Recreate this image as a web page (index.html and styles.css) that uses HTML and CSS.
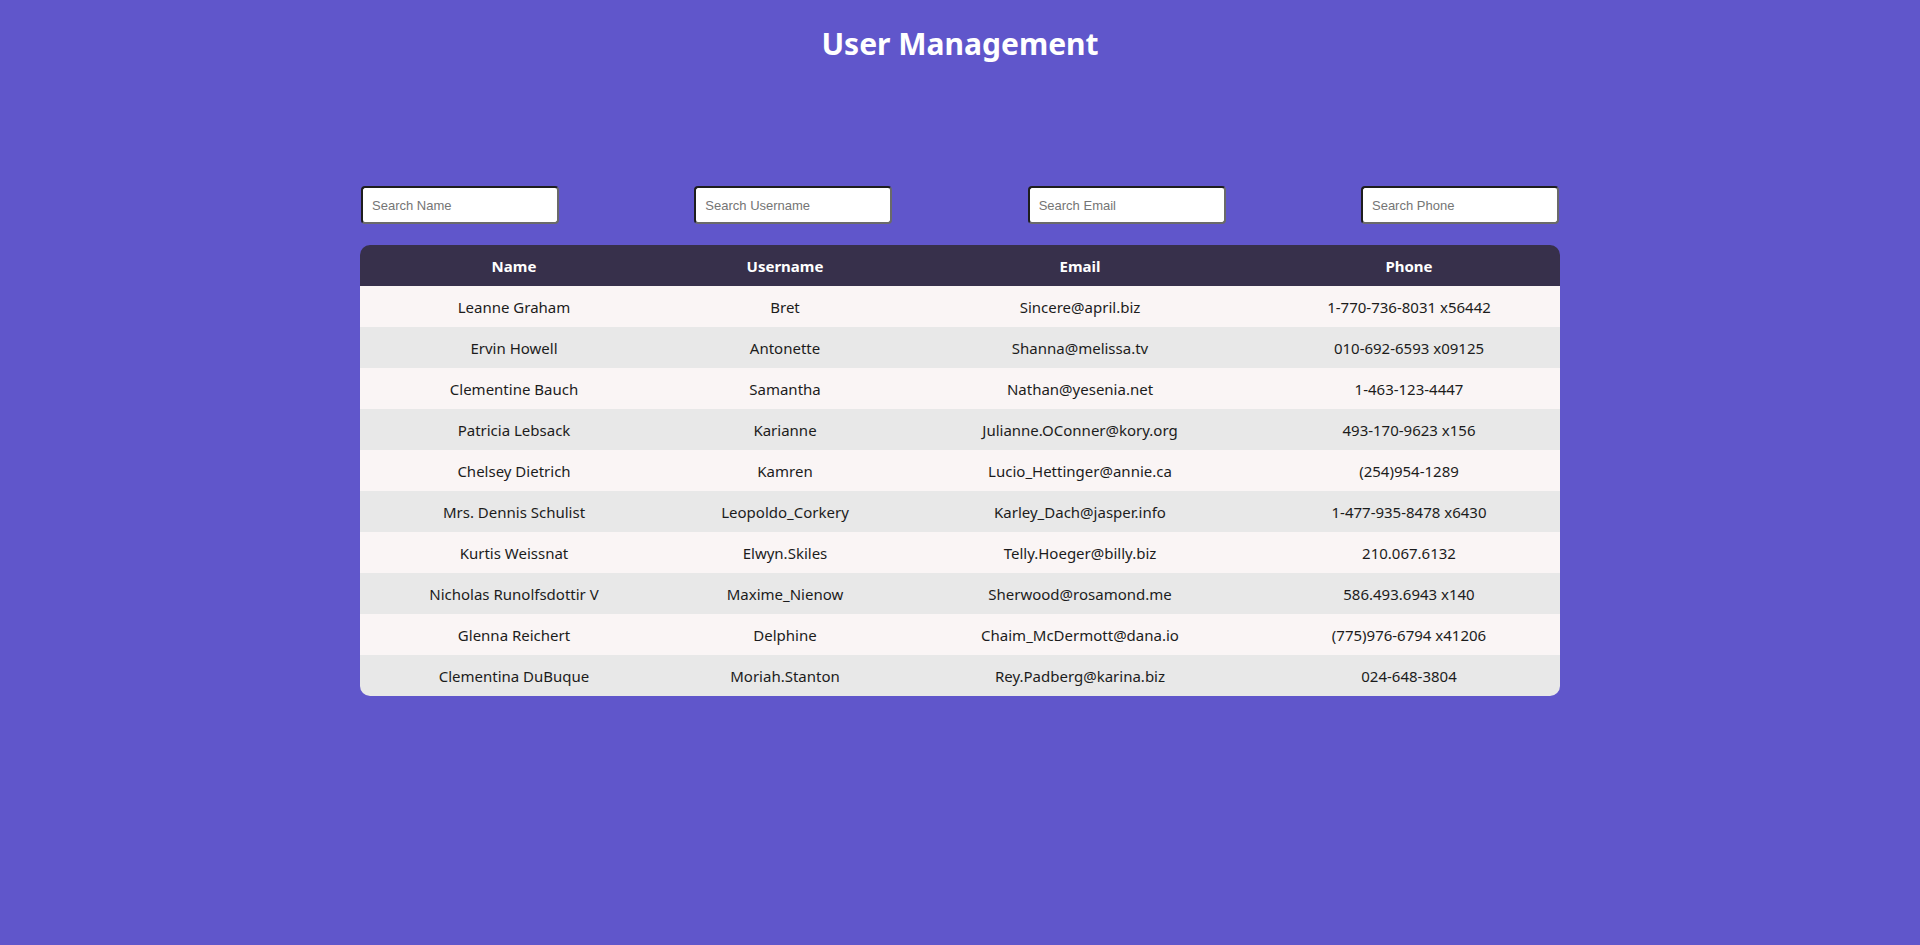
FILE: index.html
```html
<!DOCTYPE html>
<html lang="en">
<head>
<meta charset="utf-8">
<title>User Management</title>
<link rel="stylesheet" href="styles.css">
</head>
<body>
<main class="page">
  <h1 class="title">User Management</h1>
  <div class="filters">
    <input class="search" type="text" placeholder="Search Name">
    <input class="search" type="text" placeholder="Search Username">
    <input class="search" type="text" placeholder="Search Email">
    <input class="search" type="text" placeholder="Search Phone">
  </div>
  <table class="users">
    <thead>
      <tr>
        <th class="col-name">Name</th>
        <th class="col-username">Username</th>
        <th class="col-email">Email</th>
        <th class="col-phone">Phone</th>
      </tr>
    </thead>
    <tbody>
      <tr><td>Leanne Graham</td><td>Bret</td><td>Sincere@april.biz</td><td>1-770-736-8031 x56442</td></tr>
      <tr><td>Ervin Howell</td><td>Antonette</td><td>Shanna@melissa.tv</td><td>010-692-6593 x09125</td></tr>
      <tr><td>Clementine Bauch</td><td>Samantha</td><td>Nathan@yesenia.net</td><td>1-463-123-4447</td></tr>
      <tr><td>Patricia Lebsack</td><td>Karianne</td><td>Julianne.OConner@kory.org</td><td>493-170-9623 x156</td></tr>
      <tr><td>Chelsey Dietrich</td><td>Kamren</td><td>Lucio_Hettinger@annie.ca</td><td>(254)954-1289</td></tr>
      <tr><td>Mrs. Dennis Schulist</td><td>Leopoldo_Corkery</td><td>Karley_Dach@jasper.info</td><td>1-477-935-8478 x6430</td></tr>
      <tr><td>Kurtis Weissnat</td><td>Elwyn.Skiles</td><td>Telly.Hoeger@billy.biz</td><td>210.067.6132</td></tr>
      <tr><td>Nicholas Runolfsdottir V</td><td>Maxime_Nienow</td><td>Sherwood@rosamond.me</td><td>586.493.6943 x140</td></tr>
      <tr><td>Glenna Reichert</td><td>Delphine</td><td>Chaim_McDermott@dana.io</td><td>(775)976-6794 x41206</td></tr>
      <tr><td>Clementina DuBuque</td><td>Moriah.Stanton</td><td>Rey.Padberg@karina.biz</td><td>024-648-3804</td></tr>
    </tbody>
  </table>
</main>
</body>
</html>
```
FILE: styles.css
```css
html, body {
  margin: 0;
  padding: 0;
}
body {
  background: #6056cb;
  font-family: "Noto Sans", "Open Sans", sans-serif;
  min-height: 945px;
}
.page {
  width: 1200px;
  margin: 0 auto;
  padding-top: 24px;
}
.title {
  margin: 0;
  text-align: center;
  color: #ffffff;
  font-size: 30px;
  line-height: 40px;
  font-weight: 700;
}
.filters {
  display: flex;
  justify-content: space-between;
  margin-top: 122px;
  padding: 0 1px;
}
.search {
  box-sizing: border-box;
  width: 198px;
  height: 38px;
  margin: 0;
  padding: 0 9px;
  background: #ffffff;
  border-width: 2px;
  border-style: solid;
  border-color: #1e1e1e #6a6a6a #6a6a6a #1e1e1e;
  border-radius: 4px;
  font-family: "Liberation Sans", Arial, sans-serif;
  font-size: 13px;
  color: #222;
  outline: none;
}
.search::placeholder {
  color: #757575;
}
.users {
  width: 1200px;
  margin-top: 21px;
  border-collapse: separate;
  border-spacing: 0;
  border-radius: 10px;
  overflow: hidden;
  table-layout: fixed;
}
.users th {
  background: #37304b;
  color: #ffffff;
  font-weight: 700;
  font-size: 15px;
  height: 41px;
  padding: 0;
  text-align: center;
}
.users td {
  height: 41px;
  padding: 0;
  text-align: center;
  font-size: 15px;
  color: #1c1c1c;
}
.users tbody tr:nth-child(odd) td {
  background: #faf5f5;
}
.users tbody tr:nth-child(even) td {
  background: #e8e8e8;
}
.col-name { width: 308px; }
.col-username { width: 234px; }
.col-email { width: 356px; }
.col-phone { width: 302px; }
```
